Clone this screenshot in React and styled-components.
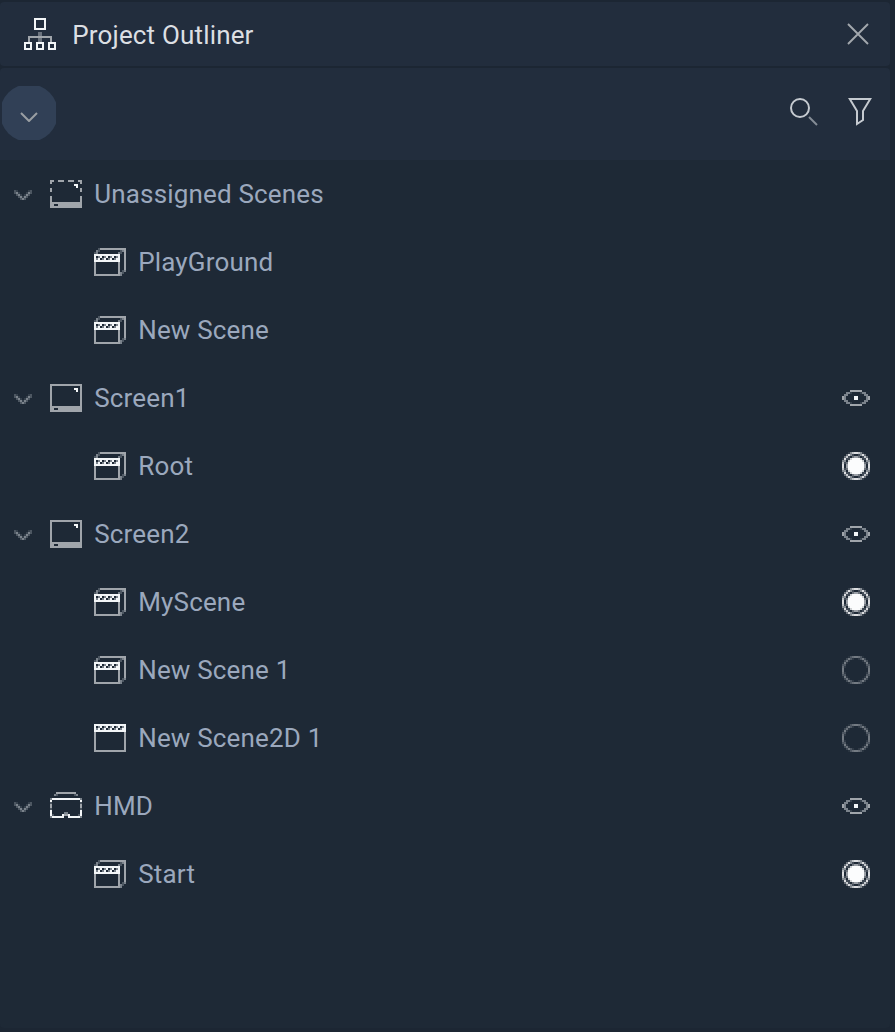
import React from "react";
import styled, { createGlobalStyle } from "styled-components";

const GlobalStyle = createGlobalStyle`
  * { box-sizing: border-box; }
  body { margin: 0; background: #1c2633; }
`;

const Panel = styled.div`
  display: flex;
  flex-direction: column;
  gap: 2px;
  width: 895px;
  height: 1032px;
  padding: 2px 5px 4px 0;
  background: #1c2633;
  font-family: Roboto, "Liberation Sans", sans-serif;
  font-size: 26px;
  line-height: 32px;
  letter-spacing: 0.17px;
`;

const Header = styled.header`
  display: flex;
  align-items: center;
  height: 64px;
  padding: 0 20px 0 24px;
  border-radius: 4px;
  background: #222d3d;
`;

const Title = styled.h1`
  flex: 1;
  margin: 0 0 0 16.2px;
  padding-top: 2px;
  font: inherit;
  color: #dcdfe3;
`;

const Section = styled.div`
  flex: 1;
  display: flex;
  flex-direction: column;
  border-radius: 4px;
  overflow: hidden;
  background: #1e2936;
`;

const Toolbar = styled.div`
  display: flex;
  align-items: center;
  height: 92px;
  padding: 0 16px 0 2px;
  background: #222d3d;
`;

const AddButton = styled.button`
  width: 54px;
  height: 54px;
  margin: -2px auto 0 0;
  padding: 8px 0 0;
  border: 0;
  clip-path: circle(29px);
  background: #314056;
  display: flex;
  align-items: center;
  justify-content: center;
`;

const IconButton = styled.button`
  display: flex;
  padding: 0;
  border: 0;
  background: none;
  margin: ${(p) => p.$margin || 0};
`;

const Svg = styled.svg`
  display: block;
  flex: none;
  fill: none;
`;

const Tree = styled.ul`
  list-style: none;
  margin: 0;
  padding: 0;
`;

const Row = styled.li`
  display: flex;
  align-items: center;
  height: 68px;
  padding-left: ${(p) => (p.$child ? 94 : 14)}px;
  padding-right: 20px;
`;

const Twisty = styled.span`
  width: 36px;
  padding-top: 2px;
`;

const Label = styled.span`
  flex: 1;
  margin-left: 12.2px;
  color: #9ba8bd;
`;

const GRAY = "#a0a5ab";
const WHITE = "#f3f6f8";

const shades = { "#": WHITE, o: GRAY, m: "#7b838c", d: "#4d5762", f: "#36414d" };

/* Icon drawn from rows of characters, one 2px cell per character. */
const Bitmap = ({ rows }) => {
  const cells = [];
  rows.forEach((row, y) => {
    for (const run of row.matchAll(/#+|o+|m+|d+|f+/g)) {
      cells.push(
        <rect
          key={`${y}-${run.index}`}
          x={run.index * 2}
          y={y * 2}
          width={run[0].length * 2}
          height="2"
          fill={shades[run[0][0]]}
        />
      );
    }
  });
  return (
    <Svg width={rows[0].length * 2} height={rows.length * 2} shapeRendering="crispEdges">
      {cells}
    </Svg>
  );
};

const CHEVRON = [
  "df     fd",
  "dmf   fmd",
  " dmf fmd ",
  "  dmfmd  ",
  "   dmd   ",
];

const SCENE_ICON = [
  "  dooooooooooooo",
  " md          dmo",
  "dm          md o",
  "#############  o",
  "# m# m# m# m#  o",
  "#m# m# m# m##  o",
  "#############  o",
  "o           o  o",
  "o           o  o",
  "o           o  o",
  "o           o  o",
  "o           o dm",
  "o           omd ",
  "ooooooooooooom  ",
];

const SCENE_2D_ICON = [
  "################",
  "# m# m# m# m# m#",
  "#m# m# m# m# m##",
  "################",
  ...Array(9).fill("o              o"),
  "oooooooooooooooo",
];

const HEADSET_ICON = [
  "   oooooooooo   ",
  "  md        dm  ",
  "                ",
  "m##############m",
  "#              #",
  "d              d",
  "o              o",
  "o              o",
  "d              d",
  "#              #",
  "#      mm      #",
  "#d    #oo#    d#",
  "m######  ######m",
  "                ",
];

const EYE_ICON = [
  "    oooooo    ",
  "  mmf    fmm  ",
  " mm        mm ",
  "om    ##    mo",
  "om    ##    mo",
  " mm        mm ",
  "  mmf    fmm  ",
  "    oooooo    ",
];

const OutlinerIcon = () => (
  <Svg width="32" height="32" strokeWidth="2">
    <path d="M14 14h4v10h-4z" fill="#6b737e" />
    <path d="M5 24v-5h22v5" stroke={GRAY} />
    <path d="M11 1h10v10h-10zM1 25h6v6h-6zM13 25h6v6h-6zM25 25h6v6h-6z" stroke={WHITE} />
  </Svg>
);

const CloseIcon = () => (
  <Svg width="24" height="24" stroke="#a3a8ae" strokeWidth="1.9">
    <path d="M2 2L22 22M22 2L2 22" />
  </Svg>
);

const SearchIcon = () => (
  <Svg width="28" height="28">
    <circle cx="10" cy="10" r="9" stroke="#c5cad0" strokeWidth="2" />
    <path d="M19 19L27 27" stroke="#858c96" strokeWidth="2" />
  </Svg>
);

const FilterIcon = () => (
  <Svg width="24" height="28" stroke="#c5cad0" strokeWidth="2">
    <path d="M1.8 1H22.2L15 13V22L9 26V13Z" />
  </Svg>
);

const AddChevron = () => (
  <Svg width="18" height="10" stroke="#9a9fa3" strokeWidth="2">
    <path d="M1 1L9 9L17 1" />
  </Svg>
);

const ScreenIcon = ({ dashed }) => (
  <Svg width="32" height="28" shapeRendering="crispEdges">
    {dashed ? (
      <path
        d="M0 0h4v2h-2v2h-2zM8 0h6v2h-6zM18 0h6v2h-6zM28 0h4v4h-2v-2h-2zM0 8h2v4h-2zM30 8h2v4h-2zM0 16h2v6h-2zM30 16h2v6h-2z"
        fill={GRAY}
      />
    ) : (
      <path d="M1 22V1H31V22" stroke={GRAY} strokeWidth="2" />
    )}
    <path d="M0 22H32V28H0ZM4 24V26H8V24Z" fill={GRAY} fillRule="evenodd" />
    <path d="M24 4h4v4h-2v-2h-2z" fill={WHITE} />
  </Svg>
);

const clamp = (n) => Math.max(0, Math.min(1, n));

/* Each 2px cell is shaded by how much of the ring and the disc covers it. */
const RadioIcon = ({ on }) => {
  const cells = [];
  for (let y = 0; y < 14; y++) {
    for (let x = 0; x < 14; x++) {
      const d = Math.hypot(x - 6.5, y - 6.5);
      const ring = clamp(1 - Math.abs(d - 6.5)) * (on ? 0.88 : 0.4);
      const disc = on ? clamp(5.1 - d) : 0;
      const opacity = Math.max(ring, disc);
      if (opacity > 0.04) {
        cells.push(
          <rect key={`${x}-${y}`} x={x * 2} y={y * 2} width="2" height="2" fillOpacity={opacity} />
        );
      }
    }
  }
  return (
    <Svg width="28" height="28" shapeRendering="crispEdges">
      <g fill="#fbfcfd">{cells}</g>
    </Svg>
  );
};

const icons = {
  unassigned: <ScreenIcon dashed />,
  screen: <ScreenIcon />,
  headset: <Bitmap rows={HEADSET_ICON} />,
  scene: <Bitmap rows={SCENE_ICON} />,
  scene2d: <Bitmap rows={SCENE_2D_ICON} />,
};

const states = {
  eye: <Bitmap rows={EYE_ICON} />,
  on: <RadioIcon on />,
  off: <RadioIcon />,
};

const items = [
  { label: "Unassigned Scenes", icon: "unassigned" },
  { label: "PlayGround", icon: "scene", child: true },
  { label: "New Scene", icon: "scene", child: true },
  { label: "Screen1", icon: "screen", state: "eye" },
  { label: "Root", icon: "scene", child: true, state: "on" },
  { label: "Screen2", icon: "screen", state: "eye" },
  { label: "MyScene", icon: "scene", child: true, state: "on" },
  { label: "New Scene 1", icon: "scene", child: true, state: "off" },
  { label: "New Scene2D 1", icon: "scene2d", child: true, state: "off" },
  { label: "HMD", icon: "headset", state: "eye" },
  { label: "Start", icon: "scene", child: true, state: "on" },
];

export default function App() {
  return (
    <>
      <GlobalStyle />
      <Panel>
        <Header>
          <OutlinerIcon />
          <Title>Project Outliner</Title>
          <IconButton aria-label="Close">
            <CloseIcon />
          </IconButton>
        </Header>
        <Section>
          <Toolbar>
            <AddButton aria-label="Add">
              <AddChevron />
            </AddButton>
            <IconButton aria-label="Search" $margin="0 30px 4px 0">
              <SearchIcon />
            </IconButton>
            <IconButton aria-label="Filter" $margin="0 2px 4px 0">
              <FilterIcon />
            </IconButton>
          </Toolbar>
          <Tree>
            {items.map((item) => (
              <Row key={item.label} $child={item.child}>
                {!item.child && (
                  <Twisty>
                    <Bitmap rows={CHEVRON} />
                  </Twisty>
                )}
                {icons[item.icon]}
                <Label>{item.label}</Label>
                {states[item.state]}
              </Row>
            ))}
          </Tree>
        </Section>
      </Panel>
    </>
  );
}
